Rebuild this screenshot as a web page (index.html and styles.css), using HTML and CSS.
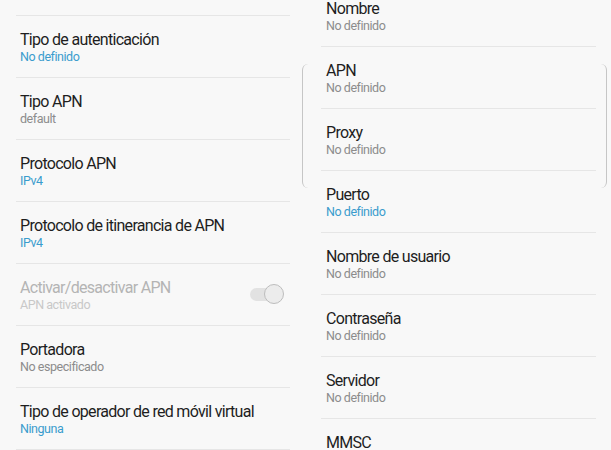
FILE: index.html
```html
<!DOCTYPE html>
<html>
<head>
<meta charset="utf-8">
<link rel="stylesheet" href="styles.css">
</head>
<body>
<div class="screen">
  <div class="pane pane-left">
    <ul class="list">
      <li class="row"><div class="text"><div class="title">Tipo de autenticación</div><div class="sub blue">No definido</div></div></li>
      <li class="row"><div class="text"><div class="title">Tipo APN</div><div class="sub">default</div></div></li>
      <li class="row"><div class="text"><div class="title">Protocolo APN</div><div class="sub blue">IPv4</div></div></li>
      <li class="row"><div class="text"><div class="title">Protocolo de itinerancia de APN</div><div class="sub blue">IPv4</div></div></li>
      <li class="row disabled"><div class="text"><div class="title">Activar/desactivar APN</div><div class="sub">APN activado</div></div><span class="toggle"><span class="thumb"></span></span></li>
      <li class="row"><div class="text"><div class="title">Portadora</div><div class="sub">No especificado</div></div></li>
      <li class="row"><div class="text"><div class="title">Tipo de operador de red móvil virtual</div><div class="sub blue">Ninguna</div></div></li>
      <li class="row"></li>
    </ul>
  </div>
  <div class="pane pane-right">
    <div class="focus"></div>
    <ul class="list">
      <li class="row"><div class="text"><div class="title">Nombre</div><div class="sub">No definido</div></div></li>
      <li class="row"><div class="text"><div class="title">APN</div><div class="sub">No definido</div></div></li>
      <li class="row"><div class="text"><div class="title">Proxy</div><div class="sub">No definido</div></div></li>
      <li class="row"><div class="text"><div class="title">Puerto</div><div class="sub blue">No definido</div></div></li>
      <li class="row"><div class="text"><div class="title">Nombre de usuario</div><div class="sub">No definido</div></div></li>
      <li class="row"><div class="text"><div class="title">Contraseña</div><div class="sub">No definido</div></div></li>
      <li class="row"><div class="text"><div class="title">Servidor</div><div class="sub">No definido</div></div></li>
      <li class="row"><div class="text"><div class="title">MMSC</div><div class="sub">No definido</div></div></li>
    </ul>
  </div>
</div>
</body>
</html>
```
FILE: styles.css
```css
html, body {
  margin: 0;
  padding: 0;
  background: #f8f8f8;
}
body {
  width: 611px;
  height: 450px;
  overflow: hidden;
  font-family: Roboto, "Noto Sans", sans-serif;
}
.screen {
  display: flex;
  width: 611px;
  height: 450px;
  overflow: hidden;
}
.pane {
  position: relative;
}
.pane-left {
  width: 305px;
}
.pane-right {
  width: 306px;
}
.list {
  list-style: none;
  margin: 0;
  padding: 0;
}
.pane-left .list {
  padding-top: 15px;
}
.pane-right .list {
  margin-top: -16px;
}
.row {
  box-sizing: border-box;
  height: 62px;
  margin: 0 15px 0 16px;
  padding: 0 7px 0 4px;
  border-top: 1px solid #e6e6e6;
  display: flex;
  align-items: center;
  justify-content: space-between;
}
.pane-right .row {
  margin-right: 15px;
  padding-left: 5px;
}
.pane-right .row:first-child {
  border-top-color: transparent;
}
.text {
  padding-top: 1px;
}
.title {
  font-size: 16px;
  line-height: 19px;
  letter-spacing: -0.7px;
  color: #1e1e1e;
}
.sub {
  font-size: 12.5px;
  line-height: 16px;
  letter-spacing: -0.45px;
  color: #8c8c8c;
}
.sub.blue {
  color: #3a9ccd;
}
.disabled .title {
  color: #b4b4b4;
}
.disabled .sub {
  color: #c8c8c8;
}
.toggle {
  position: relative;
  width: 26px;
  height: 13px;
  border-radius: 7px;
  background: #e2e2e2;
  margin-right: 7px;
}
.thumb {
  position: absolute;
  right: -8px;
  top: -4px;
  width: 18px;
  height: 18px;
  border-radius: 50%;
  background: #ececec;
  border: 1px solid #bdbdbd;
}
.focus {
  position: absolute;
  left: -3px;
  top: 64px;
  width: 303px;
  height: 124px;
  border-left: 1px solid #c6c6c6;
  border-right: 1px solid #c6c6c6;
  border-radius: 6px;
  pointer-events: none;
}
```
